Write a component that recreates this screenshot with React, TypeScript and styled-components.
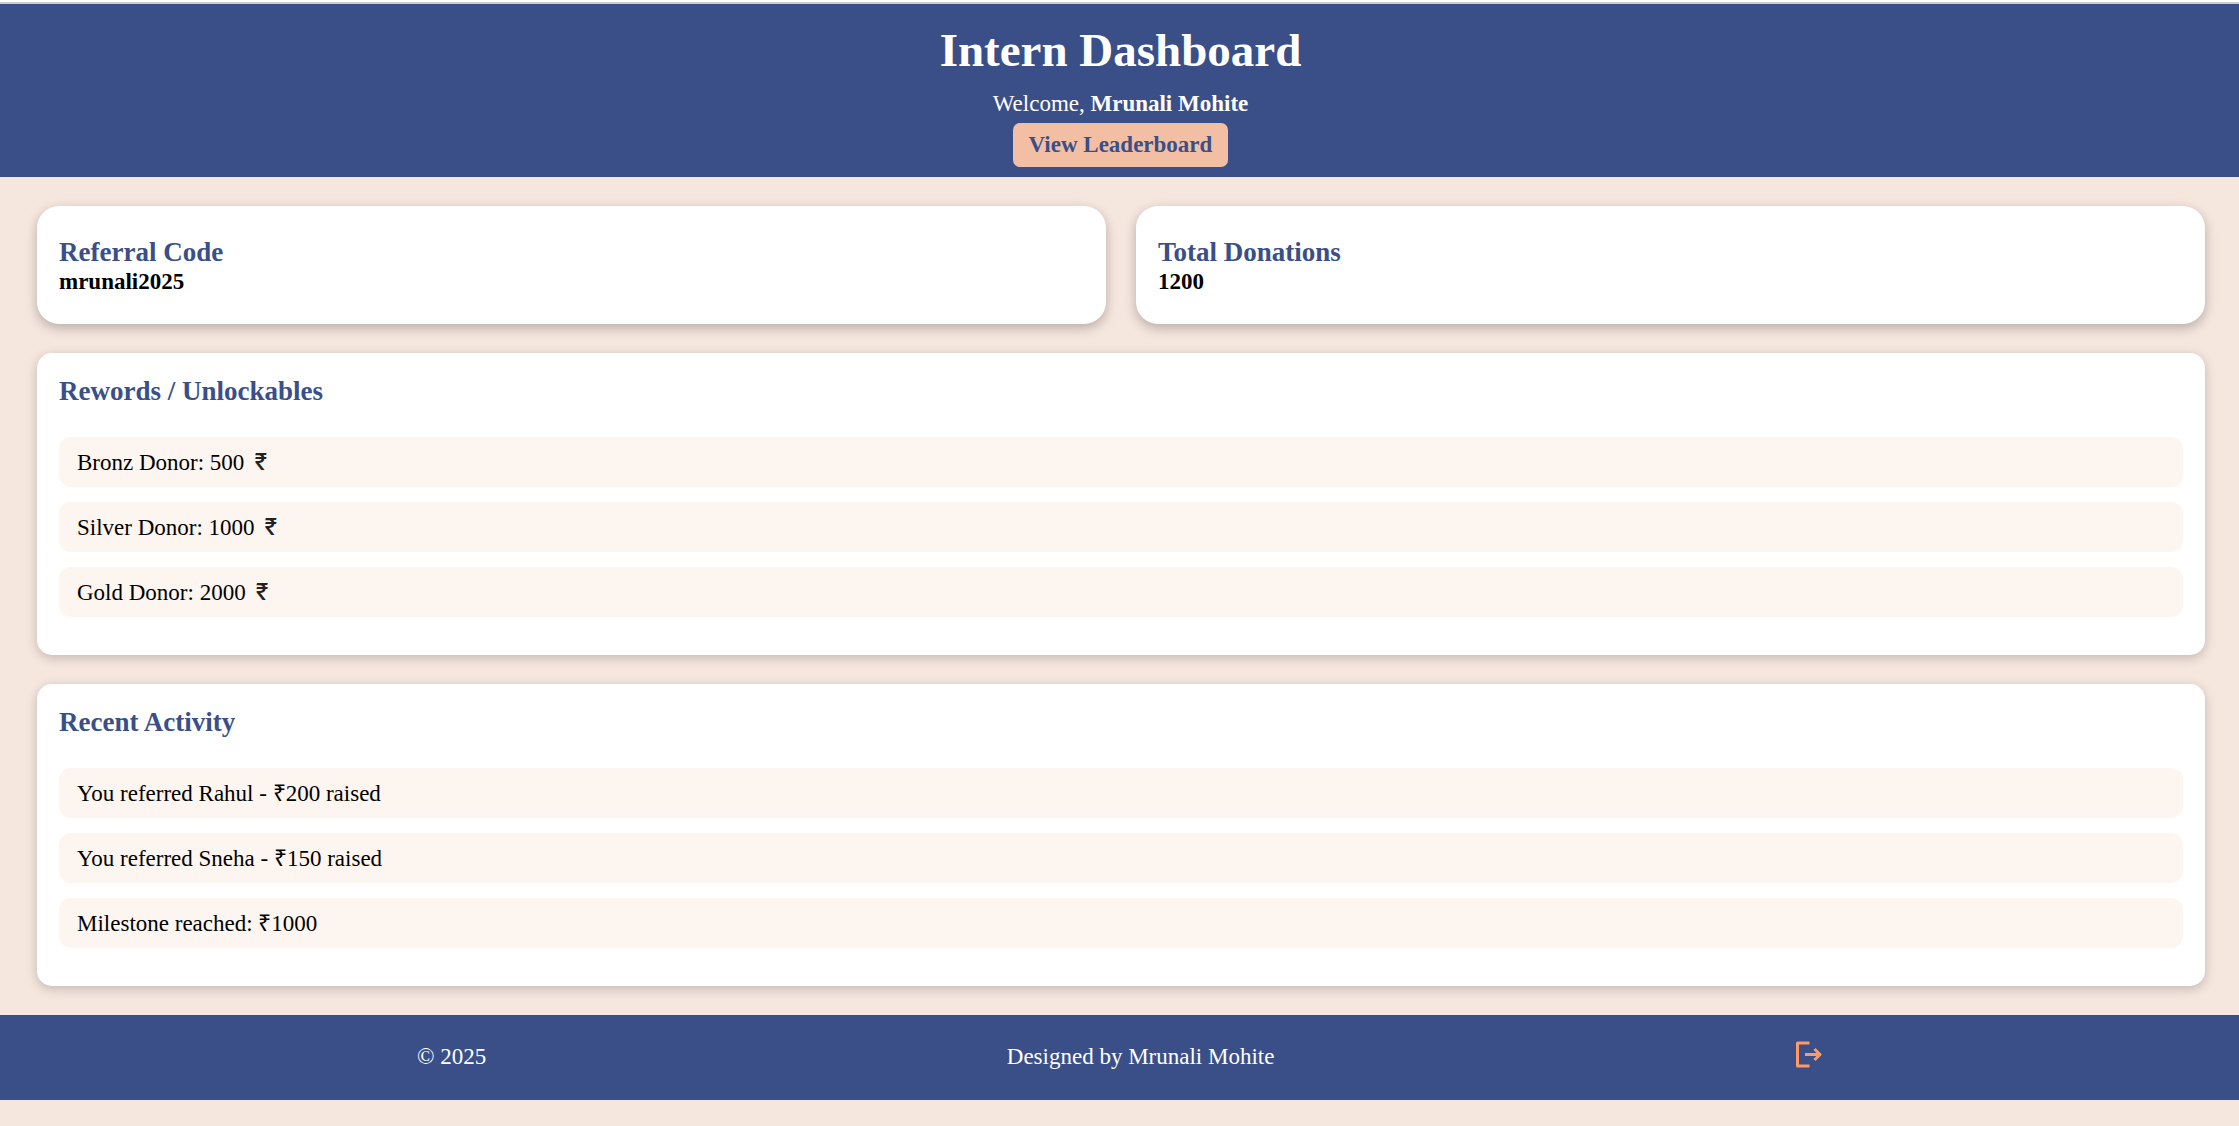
import React from 'react';
import styled, { createGlobalStyle } from 'styled-components';

const GlobalStyle = createGlobalStyle`
  *, *::before, *::after { box-sizing: border-box; }
  body {
    margin: 0;
    background: #f5e6de;
    color: #000;
    font-family: "Liberation Serif", "Times New Roman", serif;
    font-size: 23px;
    line-height: 27px;
  }
  h1, h2, p, ul { margin: 0; padding: 0; }
`;

const Page = styled.div`
  border-top: 2px solid #fff;
`;

const Header = styled.header`
  display: flex;
  flex-direction: column;
  align-items: center;
  padding: 19px 28px 10px 30px;
  border-top: 2px solid #ccc;
  background: #3a4f88;
  color: #fff;
`;

const Title = styled.h1`
  margin-bottom: 13px;
  font-size: 47px;
  line-height: 54px;
`;

const LeaderboardButton = styled.button`
  margin-top: 6px;
  padding: 8px 16px;
  border: 0;
  border-radius: 7px;
  background: #f2bfa5;
  color: #3a4f88;
  font: inherit;
  font-weight: bold;
  line-height: 28px;
  cursor: pointer;
`;

const Main = styled.main`
  display: flex;
  flex-direction: column;
  gap: 29px;
  padding: 29px 34px 29px 37px;
`;

const Stats = styled.div`
  display: grid;
  grid-template-columns: 1fr 1fr;
  gap: 30px;
`;

const Heading = styled.h2`
  color: #3a4f88;
  font-size: 27px;
  line-height: 32px;
`;

const StatCard = styled.section`
  padding: 30px 22px 29px;
  border-radius: 22px;
  background: #fff;
  box-shadow: 0 4px 12px rgba(0, 0, 0, 0.25);
`;

const StatValue = styled.p`
  font-weight: bold;
`;

const Panel = styled.section`
  padding: 22px 22px 38px;
  border-radius: 15px;
  background: #fff;
  box-shadow: 0 3px 12px rgba(0, 0, 0, 0.2);
`;

const List = styled.ul`
  display: flex;
  flex-direction: column;
  gap: 15px;
  margin-top: 30px;
  list-style: none;
`;

const Item = styled.li`
  padding: 12px 18px 11px;
  border-radius: 12px;
  background: #fdf5f0;
`;

const Rupee = styled.span`
  margin-left: 10px;
  color: #222;
  font-family: Inter, Roboto, sans-serif;
  font-weight: 500;
  line-height: 20px;
`;

const Footer = styled.footer`
  display: flex;
  justify-content: space-around;
  align-items: center;
  padding: 26px 7% 28px;
  background: #3a4f88;
  color: #fff;
`;

const LogoutLink = styled.a`
  display: flex;
  padding-bottom: 4px;
  color: #ff9966;
`;

const rewards = ['Bronz Donor: 500', 'Silver Donor: 1000', 'Gold Donor: 2000'];
const activity = [
  'You referred Rahul - ₹200 raised',
  'You referred Sneha - ₹150 raised',
  'Milestone reached: ₹1000',
];

function LogoutIcon() {
  return (
    <svg width="27" height="27" viewBox="0 0 27 27" fill="none" stroke="currentColor" strokeWidth="3" aria-hidden="true">
      <path d="M14.5 2H2.5V25H14.500" strokeLinejoin="round" />
      <path d="M10 13.500H25" />
      <path d="M19.500 8L25 13.500L19.500 19" strokeLinejoin="round" />
    </svg>
  );
}

export default function App() {
  return (
    <Page>
      <GlobalStyle />
      <Header>
        <Title>Intern Dashboard</Title>
        <p>Welcome, <strong>Mrunali Mohite</strong></p>
        <LeaderboardButton type="button">View Leaderboard</LeaderboardButton>
      </Header>
      <Main>
        <Stats>
          <StatCard>
            <Heading>Referral Code</Heading>
            <StatValue>mrunali2025</StatValue>
          </StatCard>
          <StatCard>
            <Heading>Total Donations</Heading>
            <StatValue>1200</StatValue>
          </StatCard>
        </Stats>
        <Panel>
          <Heading>Rewords / Unlockables</Heading>
          <List>
            {rewards.map((text) => (
              <Item key={text}>{text}<Rupee>₹</Rupee></Item>
            ))}
          </List>
        </Panel>
        <Panel>
          <Heading>Recent Activity</Heading>
          <List>
            {activity.map((text) => (
              <Item key={text}>{text}</Item>
            ))}
          </List>
        </Panel>
      </Main>
      <Footer>
        <p>© 2025</p>
        <p>Designed by Mrunali Mohite</p>
        <LogoutLink href="#logout" aria-label="Log out"><LogoutIcon /></LogoutLink>
      </Footer>
    </Page>
  );
}
